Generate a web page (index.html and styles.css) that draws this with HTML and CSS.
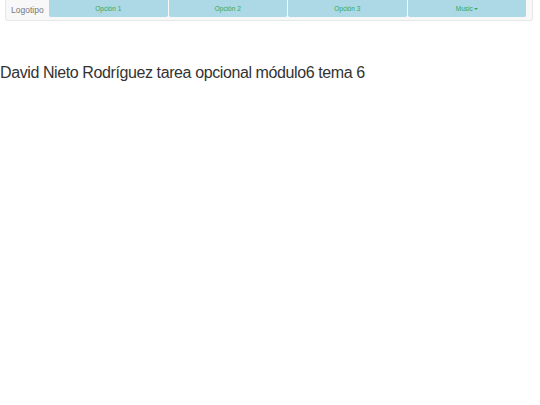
FILE: index.html
```html
<!DOCTYPE html>
<html lang="es">

<head>
    <meta charset="UTF-8">
    <meta name="viewport" content="width=device-width, initial-scale=1.0">
    <title>Tarea opcional</title>
    <link rel="stylesheet" href="styles.css">
</head>

<body>
    <nav class="navbar">
        <span class="brand">Logotipo</span>
        <ul class="menu">
            <li><a href="#">Opción 1</a></li>
            <li><a href="#">Opción 2</a></li>
            <li><a href="#">Opción 3</a></li>
            <li><a href="#">Music<span class="caret"></span></a></li>
        </ul>
    </nav>

    <h1 class="title">David Nieto Rodríguez tarea opcional módulo6 tema 6</h1>
</body>

</html>
```

FILE: styles.css
```css
body {
    margin: 0;
    font-family: 'Liberation Sans', Arial, sans-serif;
    color: #333;
    background: #fff;
}

.navbar {
    display: flex;
    align-items: flex-start;
    margin: 0 7px 0 5px;
    height: 21px;
    background-color: #f8f8f8;
    border: 1px solid #e7e7e7;
    border-top: none;
    border-radius: 0 0 3px 3px;
    box-sizing: border-box;
}

.brand {
    width: 38px;
    padding-left: 5px;
    font-size: 8.5px;
    line-height: 21px;
    color: #777;
}

.menu {
    display: flex;
    flex: 1;
    gap: 1px;
    margin: 0 6px 0 0;
    padding: 0;
    list-style: none;
}

.menu li {
    flex: 1;
}

.menu a {
    display: block;
    height: 17px;
    line-height: 17px;
    background-color: #add8e6;
    color: #34a853;
    font-size: 6.5px;
    text-align: center;
    text-decoration: none;
    border-radius: 0 0 2px 2px;
}

.caret {
    display: inline-block;
    margin-left: 1px;
    vertical-align: middle;
    border-top: 2px solid #34a853;
    border-left: 2px solid transparent;
    border-right: 2px solid transparent;
}

.title {
    margin: 42px 0 0;
    font-size: 16px;
    font-weight: normal;
    line-height: 19px;
    letter-spacing: -0.4px;
}
```
